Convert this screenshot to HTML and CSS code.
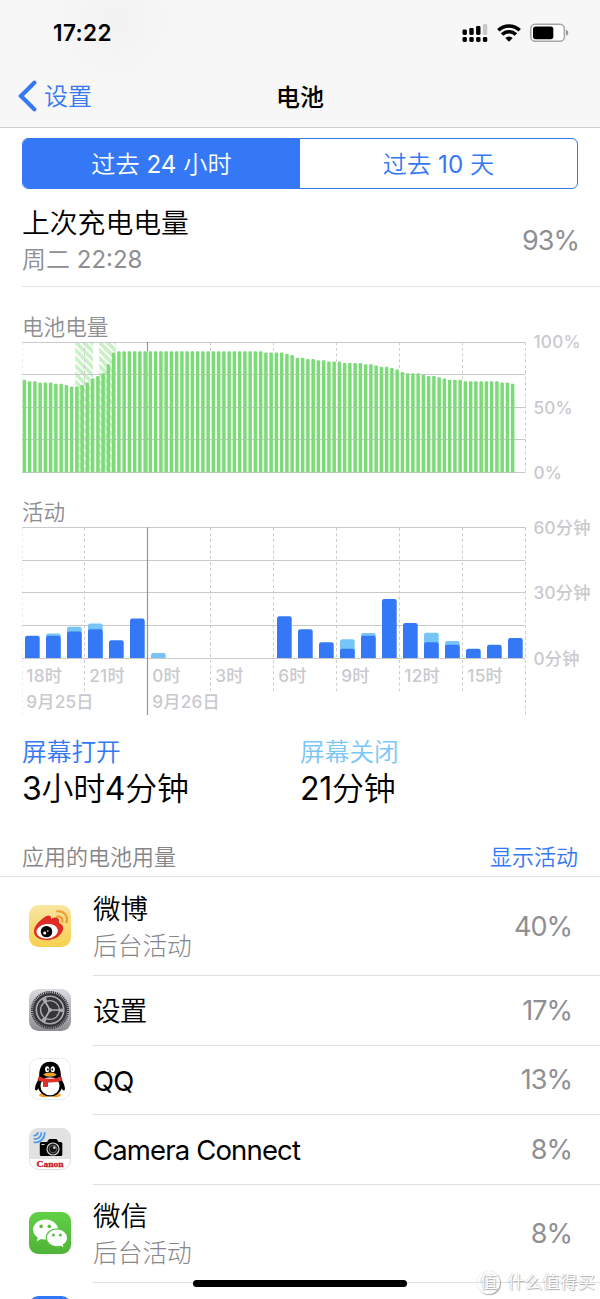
FILE: index.html
```html
<!DOCTYPE html>
<html lang="zh-CN">
<head>
<meta charset="utf-8">
<title>电池</title>
<link rel="stylesheet" href="styles.css">
</head>
<body>
<div class="screen">
  <header class="header">
    <div class="status">
      <span class="clock">17:22</span>
      <span class="status-icons">
        <svg width="26" height="20" viewBox="0 0 26 20">
          <g fill="#000"><rect x=".5" y="6.5" width="4.4" height="5.5" rx="1.4"/><rect x="7.3" y="5" width="4.4" height="7" rx="1.4"/><rect x="14.1" y="3" width="4.4" height="9" rx="1.4"/>
          <rect x=".5" y="14" width="4.4" height="5" rx="1.4"/><rect x="7.3" y="14" width="4.4" height="5" rx="1.4"/><rect x="14.1" y="14" width="4.4" height="5" rx="1.4"/><rect x="20.9" y="14" width="4.4" height="5" rx="1.4"/></g>
          <rect x="20.9" y="1" width="4.4" height="11" rx="1.4" fill="#c8c8c8"/>
        </svg>
        <svg width="24" height="18" viewBox="0 0 24 18">
          <g fill="none" stroke="#000" stroke-width="3.5"><path d="M1.3 6.3a15.3 15.3 0 0 1 21.4 0"/><path d="M5.1 10.600a9.8 9.8 0 0 1 13.8 0"/></g>
          <path d="M8.3 14a5.3 5.3 0 0 1 7.4 0L12 17.800z"/>
        </svg>
        <svg width="39" height="20" viewBox="0 0 39 20">
          <rect x=".8" y="1.3" width="33.6" height="17" rx="4.6" fill="#fff" stroke="#a5a5a5" stroke-width="1.5"/>
          <rect x="3" y="3.4" width="20.3" height="12.8" rx="2.6"/>
          <path d="M36 6.8c3 .8 3 5.200 0 6z" fill="#999"/>
        </svg>
      </span>
    </div>
    <nav class="nav">
      <a class="back"><svg width="20" height="32" viewBox="0 0 20 32"><path d="M16.300 2.800 3 16l13.300 13.200" fill="none" stroke="#3478f6" stroke-width="4.200" stroke-linecap="round" stroke-linejoin="miter"/></svg><span class="back-text">设置</span></a>
      <h1 class="title">电池</h1>
    </nav>
  </header>

  <div class="segment">
    <span class="seg seg-on">过去 24 小时</span>
    <span class="seg">过去 10 天</span>
  </div>

  <section class="charge">
    <div><div class="charge-title">上次充电电量</div><div class="charge-time">周二 22:28</div></div>
    <span class="charge-value">93%</span>
  </section>

  <section class="chart">
    <h2 class="chart-title">电池电量</h2>
    <svg class="plot" id="level" width="578" height="160" viewBox="22 326 578 160"></svg>
  </section>
  <section class="chart chart-activity">
    <h2 class="chart-title">活动</h2>
    <svg class="plot" id="activity" width="578" height="210" viewBox="22 511 578 210"></svg>
  </section>

  <section class="totals">
    <div><div class="total-name on">屏幕打开</div><div class="total-value">3小时4分钟</div></div>
    <div><div class="total-name off">屏幕关闭</div><div class="total-value">21分钟</div></div>
  </section>

  <div class="list-head"><span>应用的电池用量</span><a class="link">显示活动</a></div>

  <ul class="apps">
    <li class="app app-tall">
      <svg class="icon" viewBox="0 0 42 42">
        <defs><linearGradient id="wb" x2="0" y2="1"><stop stop-color="#f8e6a2"/><stop offset="1" stop-color="#f7d050"/></linearGradient></defs>
        <rect width="42" height="42" rx="9.500" fill="url(#wb)"/>
        <path d="M15 12.500c3.500-2.700 7.500-3.400 7 1.500 4-2.500 8.800-2 8 2.500-.2 1 .2 1.500 1 2 4 1.800 4 6 1.500 9.500-3 4.700-9.500 7.400-16 7-6.500-.4-11.600-3.700-11.500-8.500.1-5.300 5-10.500 10-14z" fill="#e02c25"/>
        <ellipse cx="18.200" cy="26.300" rx="10.800" ry="7.300" fill="#fff" transform="rotate(-7 18.200 26.300)"/>
        <circle cx="17.500" cy="26.600" r="5.700"/><circle cx="15.700" cy="28" r="1.500" fill="#fff"/><circle cx="18.800" cy="26" r=".8" fill="#fff"/>
        <g fill="none" stroke="#f19a37" stroke-width="2.200" stroke-linecap="round"><path d="M28.200 11.500c3.600-.6 6 2 5.200 5.200"/><path d="M28.200 6.300c7-.6 11.200 5 9.300 11"/></g>
      </svg>
      <div class="app-body"><div class="app-text"><div class="app-name">微博</div><div class="app-note">后台活动</div></div><span class="app-value">40%</span></div>
    </li>
    <li class="app app-short">
      <svg class="icon" viewBox="0 0 42 42">
        <defs><linearGradient id="st" x2="0" y2="1"><stop stop-color="#dcdce0"/><stop offset="1" stop-color="#8c8c91"/></linearGradient></defs>
        <rect width="42" height="42" rx="9.500" fill="url(#st)"/>
        <circle cx="21" cy="21" r="18" fill="none" stroke="#35363a" stroke-width="2.200" stroke-dasharray="1.100 .8"/>
        <circle cx="21" cy="21" r="15.800" fill="#a9a9ad" stroke="#35363a" stroke-width="2.400"/>
        <circle cx="21" cy="21" r="11.500" fill="none" stroke="#35363a" stroke-width="2.800" stroke-dasharray="20.090 4" stroke-dashoffset="22"/>
        <circle cx="21" cy="21" r="8.700" fill="#35363a"/>
        <path d="M21 21h11M21 21l-5.500-9.500M21 21l-5.500 9.500" stroke="#b0b0b4" stroke-width="1.700"/><circle cx="21" cy="21" r="2" fill="#b0b0b4"/>
      </svg>
      <div class="app-body"><div class="app-name">设置</div><span class="app-value">17%</span></div>
    </li>
    <li class="app app-short">
      <svg class="icon" viewBox="0 0 42 42">
        <rect x=".5" y=".5" width="41" height="41" rx="9.500" fill="#fff" stroke="#ececec"/>
        <ellipse cx="15.500" cy="37" rx="5.500" ry="2.200" fill="#f4a32b"/><ellipse cx="26.500" cy="37" rx="5.500" ry="2.200" fill="#f4a32b"/>
        <path d="M10.500 20C7.500 24 5.500 29 6.200 32c1 1.400 3-.6 4-2.500h21.600c1 1.900 3 3.900 4 2.500.7-3-1.300-8-4.300-12z"/>
        <ellipse cx="21" cy="27.500" rx="12" ry="11"/>
        <ellipse cx="21" cy="28" rx="9.500" ry="9.300" fill="#fff"/>
        <path d="M10.200 19.500C9.700 9.500 13.500 3.800 21 3.800s11.300 5.700 10.800 15.700z"/>
        <ellipse cx="18.200" cy="11.300" rx="2.100" ry="3" fill="#fff"/><ellipse cx="23.800" cy="11.300" rx="2.100" ry="3" fill="#fff"/><circle cx="18.800" cy="11.500" r="1"/><circle cx="23.300" cy="11.500" r=".9"/>
        <path d="M14.300 16.500c3-2.700 10.400-2.700 13.400 0-3 2.900-10.400 2.900-13.400 0z" fill="#f4a32b"/>
        <path d="M9.500 18.500C16 21.500 26 21.500 32.500 18.500l1 3.800C30 24.200 24 24.700 19 24.500V29h-5v-5.200c-2-.3-4-.9-5.500-1.600z" fill="#dd3029"/>
      </svg>
      <div class="app-body"><div class="app-name">QQ</div><span class="app-value">13%</span></div>
    </li>
    <li class="app app-short">
      <svg class="icon" viewBox="0 0 42 42">
        <rect x=".5" y=".5" width="41" height="41" rx="9.500" fill="#fff" stroke="#e0e0e0"/>
        <path d="M0 31V9.500A9.500 9.500 0 0 1 9.500 0h23A9.500 9.500 0 0 1 42 9.500V31z" fill="#e2e2e3"/>
        <g fill="none" stroke="#4a98e8" stroke-width="1.700"><path d="M4.500 7.500Q8.500 8 9 4.200"/><path d="M4.500 11Q12 11.300 12.500 4.200"/><path d="M4.500 14.500Q15.500 14.500 15.800 4.200"/></g>
        <path d="M10.800 15.500q0-1.500 1.500-1.500H18l2.200-3h7.300l2.200 3h2.100q1.500 0 1.500 1.500v11q0 1.500-1.500 1.500H12.300q-1.500 0-1.500-1.500z"/>
        <circle cx="24" cy="21" r="6" fill="#111" stroke="#d0d0d0" stroke-width="1.200"/><circle cx="24" cy="21" r="3.800" fill="none" stroke="#666"/><circle cx="25.300" cy="19.700" r="1.400" fill="#ccc"/><path d="M12.500 16.500h3" stroke="#ddd"/>
        <text class="canon" x="21" y="38.800" text-anchor="middle" textLength="27" lengthAdjust="spacingAndGlyphs">Canon</text>
      </svg>
      <div class="app-body"><div class="app-name">Camera Connect</div><span class="app-value">8%</span></div>
    </li>
    <li class="app app-tall">
      <svg class="icon" viewBox="0 0 42 42">
        <defs><linearGradient id="wx" x2="0" y2="1"><stop stop-color="#61d046"/><stop offset="1" stop-color="#50b338"/></linearGradient></defs>
        <rect width="42" height="42" rx="9" fill="url(#wx)"/>
        <path d="M16.500 7.500C9.500 7.500 4 12 4 17.600c0 3.200 1.800 6 4.700 7.800L7.800 29.300l4.300-2.300c1.400.4 2.900.6 4.400.6 7 0 12.500-4.500 12.500-10S23.500 7.500 16.500 7.500z" fill="#fff"/>
        <path d="M28 16.800c-6 0-10.700 4-10.700 9s4.700 9 10.700 9c1.300 0 2.500-.2 3.600-.5l3.600 1.900-.8-3.400c2.600-1.600 4.200-4.100 4.200-7 0-5-4.700-9-10.600-9z" fill="#fff" stroke="#58c03e" stroke-width="1.200"/>
        <g fill="#58c03e"><circle cx="12.200" cy="14.400" r="1.800"/><circle cx="20.300" cy="14.400" r="1.800"/><circle cx="24.400" cy="23" r="1.500"/><circle cx="31.400" cy="23" r="1.500"/></g>
      </svg>
      <div class="app-body"><div class="app-text"><div class="app-name">微信</div><div class="app-note">后台活动</div></div><span class="app-value">8%</span></div>
    </li>
    <li class="app app-next"><span class="icon icon-blue"></span></li>
  </ul>

  <div class="watermark"><span class="mark">值</span><span>什么值得买</span></div>
  <div class="home-bar"></div>
</div>
<script src="charts.js"></script>
</body>
</html>
```
FILE: styles.css
```css
* { box-sizing: border-box; }
body { margin: 0; background: #fff; }
.screen {
  position: relative; width: 600px; height: 1299px; overflow: hidden; background: #fff; color: #000;
  font-family: Inter, "Noto Sans CJK SC DemiLight", "Noto Sans CJK SC", sans-serif; font-weight: 400;
  display: flex; flex-direction: column;
}
.screen > * { flex-shrink: 0; }
.header { height: 128px; border-bottom: 1px solid #cfcfd0; background: radial-gradient(circle at 115px 20px, #f2f2f2, rgba(246,246,246,0) 70px), #f7f7f7; }
.status { height: 65px; display: flex; justify-content: space-between; align-items: center; padding: 0 31px 0 53px; }
.clock { font-weight: 600; font-size: 22.500px; letter-spacing: .4px; }
.status-icons { display: flex; align-items: center; gap: 9px; }
.nav { height: 62px; display: grid; grid-template-columns: 1fr auto 1fr; align-items: center; padding-left: 18px; }
.back { display: flex; align-items: center; gap: 6px; color: #3478f6; font-size: 24px; line-height: 32px; }
.back-text { padding-top: 2px; }
.title { grid-column: 2; margin: 0; font-family: "Noto Sans CJK SC", sans-serif; font-size: 24px; font-weight: 500; line-height: 31px; transform: translate(-9px, -1px); }
.segment { margin: 10px 22px 0; height: 51px; border: 1.500px solid #3478f6; border-radius: 6px; display: flex; overflow: hidden; }
.seg { flex: 1; display: flex; align-items: center; justify-content: center; color: #3478f6; font-size: 24.200px; letter-spacing: 0; padding-bottom: 2px; }
.seg-on { background: #3478f6; color: #fff; }
.charge { margin-left: 22px; height: 98px; padding: 14px 21px 0 0; border-bottom: 1px solid #e3e3e5; display: flex; justify-content: space-between; }
.charge-title { font-size: 27.800px; line-height: 41px; }
.charge-time { font-size: 24px; line-height: 32px; color: #8e8e93; }
.charge-value { font-size: 27px; line-height: 75px; color: #8e8e93; letter-spacing: -1px; }
.chart { padding-left: 22px; margin-top: 24px; }
.chart-title { margin: 0; height: 25px; line-height: 32px; font-size: 21.600px; font-weight: 400; color: #8e8e93; }
.plot { display: block; margin-top: -10px; }
.chart-activity { margin-top: 10px; }
.axis { font: 500 17.200px Inter, "Noto Sans CJK SC", sans-serif; fill: #c9c9ce; letter-spacing: .2px; }
.grid { stroke: #c9c9cb; stroke-width: 1; fill: none; }
.dashes { stroke: #cdcdcf; stroke-width: 1; stroke-dasharray: 3 2.750; }
.midnight { stroke: #969696; stroke-width: 1.200; }
.totals { display: grid; grid-template-columns: 278px 1fr; padding: 15px 0 0 22px; height: 110px; }
.total-name { font-size: 24.700px; line-height: 32px; }
.on { color: #3478f6; }
.off { color: #7ac7f7; }
.total-value { font-size: 32px; line-height: 42px; letter-spacing: -.3px; }
.list-head { height: 46px; border-bottom: 1px solid #e0e0e2; padding: 10px 22px 0; display: flex; justify-content: space-between; font-size: 22px; line-height: 32px; color: #868689; }
.link { color: #3478f6; }
.apps { margin: 0; padding: 0; list-style: none; }
.app { display: flex; align-items: center; height: 69.600px; padding-left: 29px; gap: 22px; }
.app-tall { height: 98px; }
.app-next { align-items: flex-start; padding-top: 14px; }
.icon { width: 42px; height: 42px; flex: none; }
.icon-blue { border-radius: 9.500px; background: #2f78f6; }
.app-body { flex: 1; height: 100%; border-bottom: 1px solid #e0e0e2; display: flex; justify-content: space-between; align-items: center; padding-right: 28px; transform: translateY(1px); }
.app-name { font-size: 27.500px; line-height: 38px; letter-spacing: -.85px; }
.app-text .app-name { letter-spacing: 0; }
.app-short .app-name { padding-top: 2px; }
.app-note { font-size: 24.700px; line-height: 34px; padding-bottom: 2px; margin-top: -1px; font-family: "Noto Sans CJK SC", sans-serif; font-weight: 300; color: #86868b; }
.app-value { font-size: 27px; color: #8e8e93; letter-spacing: -1px; }
.canon { font: 700 9px "Liberation Serif", serif; fill: #c4161c; stroke: #c4161c; stroke-width: .3; }
.home-bar { position: absolute; left: 193px; top: 1280px; width: 214px; height: 7px; border-radius: 4px; background: #000; }
.watermark { position: absolute; left: 477px; top: 1269px; height: 26px; display: flex; align-items: center; gap: 7px; font-size: 17.600px; line-height: 26px; color: #fff; text-shadow: 1px 1px 1px #aaa, -.5px -.5px 1px #ccc; white-space: nowrap; }
.mark { width: 23px; height: 23px; border-radius: 50%; box-shadow: 1px 1px 1px #aaa, 0 0 1px #ccc; display: flex; align-items: center; justify-content: center; }
```
FILE: charts.js
```js
// Battery percentage every 15 minutes.
const levels = [
  71, 70, 70, 69, 69, 69, 68, 68, 67, 66, 66, 67, 69, 72, 74, 76, 83, 92,
  ...Array(28).fill(93), 92, 92, 92, 92, 91, 90, 88,
  88, 87, 87, 86, 86, 85, 85, 85, 84, 84, 84, 84, 83, 83, 82, 81, 81, 80, 79,
  77, 76, 76, 76, 75, 74, 74, 73, 72, 71, 71, 71, 70, 70, 70, 70, 70, 70, 70, 69, 69, 68
];
// Hour slot, minutes with screen on, total minutes.
const activity = [
  [0, 10.2, 0], [1, 10.2, 11.2], [2, 12.2, 14.3], [3, 13.2, 15.8], [4, 8.1, 0], [5, 18.1, 0], [6, 0, 2.3],
  [12, 19.2, 0], [13, 13.2, 0], [14, 7.2, 0], [15, 4.2, 8.6], [16, 10.2, 11.5], [17, 27.1, 0], [18, 16.1, 0],
  [19, 7.2, 11.6], [20, 6.1, 7.8], [21, 4.2, 0], [22, 6.1, 0], [23, 9.2, 0]
];

const LEFT = 22, RIGHT = 525.5, HEIGHT = 130.6;

function horizontals(top) {
  return [0, 1, 2, 3, 4].map(i => {
    const y = Math.floor(top + i * HEIGHT / 4) + 0.5;
    return `<path class="grid" d="M${LEFT} ${y}H${RIGHT}"/>`;
  }).join('');
}

function verticals(top, ends) {
  return ends.map((end, i) => i === 2 ? '' :
    `<path class="dashes" d="M${i === 0 ? 22 : 21.5 + i * 63} ${top}V${end}"${i === 0 ? ' opacity=".6"' : ''}/>`).join('');
}

function bar(x, bottom, width, height, radius, fill) {
  const top = bottom - height;
  return `<path fill="${fill}" d="M${x} ${bottom}V${top + radius}q0-${radius} ${radius}-${radius}h${width - 2 * radius}q${radius} 0 ${radius} ${radius}V${bottom}z"/>`;
}

function label(x, y, text) {
  return `<text class="axis" x="${x}" y="${y}">${text}</text>`;
}

function drawLevel() {
  let s = `<defs><pattern id="hatch" width="5.6" height="5.6" patternUnits="userSpaceOnUse" patternTransform="rotate(-45)"><rect width="5.6" height="5.6" fill="#fff"/><rect width="3.700" height="5.6" fill="#c9f0c6"/></pattern></defs>`;
  s += '<rect x="75.300" y="342" width="17.800" height="130.600" fill="url(#hatch)"/><rect x="99.200" y="342" width="16.600" height="130.600" fill="url(#hatch)"/>';
  s += horizontals(342) + verticals(342, [472.5, 387, 0, 351, 353, 362, 371, 380, 472.5]);
  levels.forEach((v, i) => { s += bar(22.65 + i * 5.25, 472.6, 3.5, v * HEIGHT / 100, 1.2, '#7bdb76'); });
  s += `<g opacity=".22">${horizontals(342)}</g>`;
  s += '<path class="midnight" d="M147.5 342V351"/><path class="midnight" opacity=".5" d="M147.5 351V472.500"/>';
  s += label(533.5, 348.3, '100%') + label(533.5, 413.6, '50%') + label(533.5, 478.8, '0%');
  document.getElementById('level').innerHTML = s;
}

function drawActivity() {
  let s = horizontals(527.6) + verticals(527.5, [715, 691, 0, 691, 691, 691, 691, 691, 715]);
  activity.forEach(([slot, on, total]) => {
    const x = 25 + slot * 21;
    if (total) s += bar(x, 658, 14.7, total * HEIGHT / 60, 2.2, '#77c5f6');
    if (on) s += bar(x, 658, 14.7, on * HEIGHT / 60, 2.2, '#3478f6');
  });
  s += '<path class="midnight" d="M147.5 527.500V715"/>';
  ['18时', '21时', '0时', '3时', '6时', '9时', '12时', '15时'].forEach((t, i) => { s += label(26.3 + i * 63, 682, t); });
  s += label(26.3, 708.4, '9月25日') + label(152.3, 708.4, '9月26日');
  s += label(533.5, 534, '60分钟') + label(533.5, 599.3, '30分钟') + label(533.5, 664.6, '0分钟');
  document.getElementById('activity').innerHTML = s;
}

drawLevel();
drawActivity();
```
